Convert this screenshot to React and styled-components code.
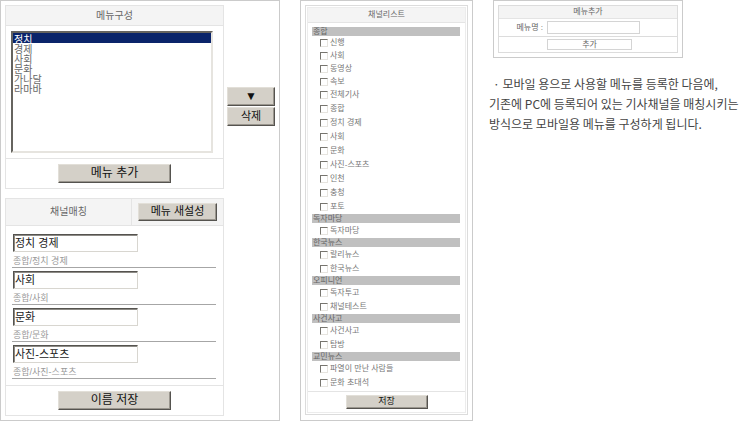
import React, { useState } from 'react';
import styled, { createGlobalStyle } from 'styled-components';

const GlobalStyle = createGlobalStyle`
  * {
    box-sizing: border-box;
  }

  body {
    margin: 0;
    background: #ffffff;
    color: #666666;
    font-family: "Liberation Sans", "Noto Sans CJK KR", sans-serif;
    font-size: 10px;
  }

  input, button, select {
    margin: 0;
    font-family: inherit;
  }
`;

const Page = styled.main`
  display: grid;
  grid-template-columns: minmax(0, 280fr) minmax(0, 177fr) minmax(0, 257fr);
  column-gap: 16px;
  align-items: start;
`;

const Panel = styled.section`
  border: 1px solid #cbcbcb;
  padding: 4px;
`;

const MenuPanel = styled(Panel)`
  display: grid;
  grid-template-columns: minmax(0, 1fr) 48px;
  column-gap: 3px;
`;

const ChannelPanel = styled(Panel)`
  margin-left: 4px;
  padding-bottom: 5px;
`;

const AddPanel = styled(Panel)`
  margin-left: 4px;
  max-width: 190px;
`;

const Stack = styled.div`
  display: flex;
  flex-direction: column;
  gap: 9px;
`;

const Box = styled.div`
  border: 1px solid ${props => props.$line || '#e4e4e4'};
`;

const BoxTitle = styled.h2`
  display: flex;
  align-items: center;
  justify-content: center;
  height: ${props => props.$height}px;
  margin: 0;
  border-bottom: 1px solid #e4e4e4;
  background: #f4f4f4;
  font-size: ${props => (props.$small ? 8 : 10)}px;
  font-weight: normal;
  line-height: 12px;
`;

const SplitTitle = styled.div`
  display: grid;
  grid-template-columns: minmax(0, 1fr) 92px;
`;

const TitleAction = styled.div`
  display: flex;
  align-items: center;
  justify-content: center;
  border-left: 1px solid #e4e4e4;
  border-bottom: 1px solid #e4e4e4;
  background: #f4f4f4;
`;

const BoxFooter = styled.div`
  display: flex;
  justify-content: center;
  padding: ${props => (props.$small ? 3 : 5)}px;
  border-top: 1px solid #e4e4e4;
`;

const RaisedButton = styled.button`
  display: flex;
  align-items: center;
  justify-content: center;
  width: ${props => props.$width}px;
  height: ${props => props.$height || 19}px;
  padding: 0 0 2px;
  border: 1px solid;
  border-color: #e2dfd8 #55534f #55534f #e2dfd8;
  box-shadow: inset -1px -1px 0 #9a968e;
  background: #d4d0c8;
  color: #111111;
  font-size: ${props => props.$size || 12}px;
  line-height: 12px;
`;

const SideButtons = styled.div`
  display: flex;
  flex-direction: column;
  gap: 1px;
  padding-top: 82px;
`;

const SelectArea = styled.div`
  padding: 5px 10px 5px 5px;
`;

const MenuSelect = styled.select`
  display: block;
  width: 100%;
  height: 122px;
  padding: 0;
  border: 2px solid;
  border-color: #66645f #e6e4df #e6e4df #66645f;
  border-radius: 0;
  outline: none;
  background: #ffffff;
  color: #666666;
  font-size: 10px;
  overflow: hidden;

  option {
    display: flex;
    align-items: center;
    height: 10px;
    min-height: 10px;
    padding: 0 1px;
    line-height: 10px;
  }

  option:checked {
    background: #0a246a linear-gradient(#0a246a, #0a246a);
    color: #ffffff;
  }
`;

const MatchList = styled.div`
  display: flex;
  flex-direction: column;
  gap: 3px;
  padding: 8px 7px 6px 6px;
`;

const MatchItem = styled.label`
  display: block;
  padding-left: 1px;
  border-bottom: 1px solid #a6a6a6;
`;

const MatchInput = styled.input`
  display: block;
  width: 125px;
  height: 18px;
  padding: 0 1px 2px;
  border: 1px solid;
  border-color: #55534f #d8d6d0 #d8d6d0 #55534f;
  border-radius: 0;
  box-shadow: inset 1px 1px 0 #8d8b86;
  background: #ffffff;
  color: #222222;
  font-size: 11px;
`;

const MatchPath = styled.span`
  display: block;
  height: 15px;
  padding-top: 3px;
  color: #999999;
  font-size: 9px;
  line-height: 12px;
`;

const DoubleBox = styled(Box)`
  padding: 1px;
`;

const ChannelGroups = styled.div`
  padding: 4px 5px 1px 4px;
`;

const GroupTitle = styled.h3`
  height: 9px;
  margin: 0;
  padding-left: 1px;
  background: #c0c0c0;
  color: #666666;
  font-size: 8px;
  font-weight: normal;
  line-height: 10px;
`;

const ChannelList = styled.div`
  padding: 0 0 1px 8px;
`;

const ChannelRow = styled.label`
  display: flex;
  align-items: center;
  gap: 2px;
  height: ${props => (props.$dense ? 13 : 14)}px;
  padding-top: 1px;
  color: #777777;
  font-size: 8px;
  line-height: 12px;
  white-space: nowrap;
`;

const CheckBox = styled.input`
  appearance: none;
  width: 8px;
  height: 8px;
  border: 1px solid;
  border-color: #77756f #e6e4df #e6e4df #77756f;
  background: #ffffff;

  &:checked {
    background: #77756f;
  }
`;

const FormRow = styled.div`
  display: grid;
  grid-template-columns: 44px minmax(0, 1fr);
  column-gap: 4px;
  align-items: center;
  height: ${props => props.$height}px;
  border-top: ${props => (props.$line ? '1px solid #dcdcdc' : 'none')};
`;

const FormLabel = styled.label`
  font-size: 8px;
  line-height: 12px;
  text-align: right;
  white-space: pre;
`;

const NameInput = styled.input`
  width: 93px;
  height: 13px;
  padding: 0 2px;
  border: 1px solid #d4d4d4;
  font-size: 8px;
`;

const AddButton = styled.button`
  display: flex;
  grid-column: 2;
  align-items: center;
  justify-content: center;
  width: 85px;
  height: 11px;
  padding: 0;
  border: 1px solid #d4d4d4;
  background: #ffffff;
  color: #666666;
  font-size: 8px;
  line-height: 9px;
`;

const Guide = styled.p`
  margin: 16px 0 0;
  color: #444444;
  font-family: "Noto Sans CJK KR", sans-serif;
  font-size: 12px;
  line-height: 20px;
  white-space: nowrap;
`;

const GuideBullet = styled.span`
  padding-left: 4px;
`;

const menus = ['정치', '경제', '사회', '문화', '가나달', '라마바'];

const matches = [
  { name: '정치 경제', path: '종합/정치 경제' },
  { name: '사회', path: '종합/사회' },
  { name: '문화', path: '종합/문화' },
  { name: '사진-스포츠', path: '종합/사진-스포츠' },
];

const channelGroups = [
  {
    title: '종합',
    channels: [
      '신행', '사회', '동영상', '속보', '전체기사', '종합', '정치 경제',
      '사회', '문화', '사진-스포츠', '인천', '충청', '포토',
    ],
  },
  { title: '독자마당', channels: ['독자마당'] },
  { title: '한국뉴스', channels: ['랄리뉴스', '한국뉴스'] },
  { title: '오피니언', channels: ['독자투고', '채널테스트'] },
  { title: '사건사고', channels: ['사건사고', '탐방'] },
  { title: '교민뉴스', channels: ['파열이 만난 사람들', '문화 초대석'] },
];

const App = () => {
  const [selected, setSelected] = useState('정치');

  return (
    <>
      <GlobalStyle />
      <Page>
        <MenuPanel>
          <Stack>
            <Box>
              <BoxTitle $height={20} id="menu-title">메뉴구성</BoxTitle>
              <SelectArea>
                <MenuSelect
                  size={11}
                  aria-labelledby="menu-title"
                  value={selected}
                  onChange={e => setSelected(e.target.value)}
                >
                  {menus.map(menu => (
                    <option key={menu} value={menu}>{menu}</option>
                  ))}
                </MenuSelect>
              </SelectArea>
              <BoxFooter>
                <RaisedButton type="button" $width={113}>메뉴 추가</RaisedButton>
              </BoxFooter>
            </Box>

            <Box>
              <SplitTitle>
                <BoxTitle $height={27}>채널매칭</BoxTitle>
                <TitleAction>
                  <RaisedButton type="button" $width={79} $height={18} $size={11}>
                    메뉴 새설성
                  </RaisedButton>
                </TitleAction>
              </SplitTitle>
              <MatchList>
                {matches.map(match => (
                  <MatchItem key={match.path}>
                    <MatchInput type="text" defaultValue={match.name} />
                    <MatchPath>{match.path}</MatchPath>
                  </MatchItem>
                ))}
              </MatchList>
              <BoxFooter>
                <RaisedButton type="button" $width={113}>이름 저장</RaisedButton>
              </BoxFooter>
            </Box>
          </Stack>

          <SideButtons>
            <RaisedButton type="button" $width={48}>▼</RaisedButton>
            <RaisedButton type="button" $width={48} $size={11}>삭제</RaisedButton>
          </SideButtons>
        </MenuPanel>

        <ChannelPanel>
          <DoubleBox $line="#dcdcdc">
            <Box $line="#ececec">
              <BoxTitle $height={15} $small>채널리스트</BoxTitle>
              <ChannelGroups>
                {channelGroups.map((group, groupIndex) => (
                  <React.Fragment key={group.title}>
                    <GroupTitle>{group.title}</GroupTitle>
                    <ChannelList>
                      {group.channels.map((channel, index) => (
                        <ChannelRow key={index} $dense={groupIndex === 0 && index < 5}>
                          <CheckBox type="checkbox" />
                          {channel}
                        </ChannelRow>
                      ))}
                    </ChannelList>
                  </React.Fragment>
                ))}
              </ChannelGroups>
              <BoxFooter $small>
                <RaisedButton type="button" $width={82} $height={14} $size={9}>저장</RaisedButton>
              </BoxFooter>
            </Box>
          </DoubleBox>
        </ChannelPanel>

        <div>
          <AddPanel>
            <Box $line="#dcdcdc">
              <BoxTitle $height={13} $small>메뉴추가</BoxTitle>
              <FormRow $height={17}>
                <FormLabel htmlFor="menu-name">메뉴명 :</FormLabel>
                <NameInput id="menu-name" type="text" />
              </FormRow>
              <FormRow $height={16} $line>
                <AddButton type="button">추가</AddButton>
              </FormRow>
            </Box>
          </AddPanel>
          <Guide>
            <GuideBullet>·</GuideBullet> 모바일 용으로 사용할 메뉴를 등록한 다음에,
            <br />
            기존에 PC에 등록되어 있는 기사채널을 매칭시키는
            <br />
            방식으로 모바일용 메뉴를 구성하게 됩니다.
          </Guide>
        </div>
      </Page>
    </>
  );
};

export default App;
